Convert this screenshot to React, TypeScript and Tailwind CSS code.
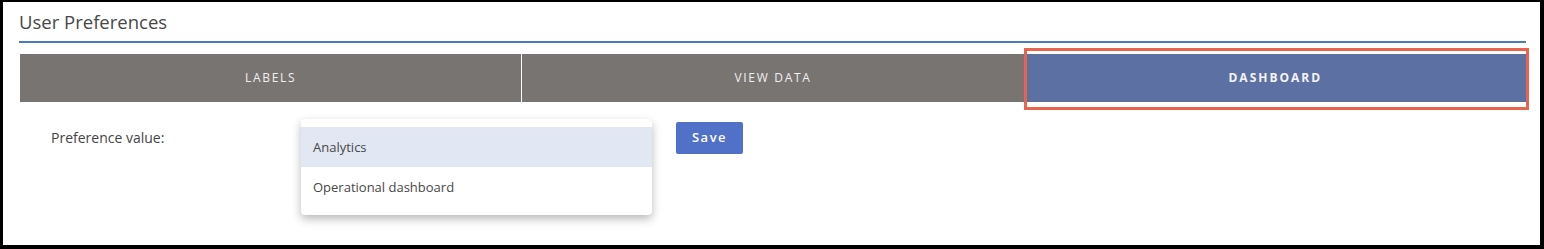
import React from "react";

const tabs = [
  { label: "LABELS", active: false },
  { label: "VIEW DATA", active: false },
  { label: "DASHBOARD", active: true },
];

export default function App() {
  return (
    <div
      className="relative box-border h-[249px] w-[1544px] overflow-hidden border-t-2 border-r-4 border-b-4 border-l-[3px] border-black bg-white"
      style={{ fontFamily: '"Open Sans", "Noto Sans", sans-serif' }}
    >
      <div className="pl-4 pr-[14px]">
        <h2 className="flex h-[39px] items-end pb-[10px] text-[18.5px] leading-none text-[#474747]">
          User Preferences
        </h2>
        <div className="h-[2px] bg-[#4a7bc2]" />
        <div className="relative mt-[11px] ml-px flex h-12">
          {tabs.map((t, i) => (
            <div
              key={t.label}
              className={
                "flex flex-1 items-center justify-center text-[12px] " +
                (i > 0 ? "border-l border-white " : "") +
                (t.active
                  ? "bg-[#5d70a3] font-bold tracking-[2px] text-[#f4f4f8]"
                  : "bg-[#787472] tracking-[1.7px] text-[#f0f0f0]")
              }
            >
              {t.label}
            </div>
          ))}
          <div className="pointer-events-none absolute top-[-6px] right-[-3px] h-[62px] w-[505px] border-[3px] border-[#e9644f]" />
        </div>
        <div className="mt-5 flex items-center pl-8">
          <div className="w-[250px] pb-px text-[14px] text-[#444]">Preference value:</div>
          <div className="relative h-8 w-[351px]">
            <div className="absolute top-[-3px] left-0 w-[351px] rounded bg-white py-2 shadow-[0_4px_10px_rgba(0,0,0,0.28)]">
              <div className="flex h-10 items-center bg-[#e1e7f3] px-3 pt-px text-[13px] text-[#484848]">
                Analytics
              </div>
              <div className="flex h-10 items-center px-3 pt-px text-[13px] text-[#484848]">
                Operational dashboard
              </div>
            </div>
          </div>
          <button className="ml-6 flex h-8 w-[67px] items-center justify-center rounded-[2px] bg-[#5171c9] text-[13px] font-semibold tracking-[1.5px] text-white">
            Save
          </button>
        </div>
      </div>
    </div>
  );
}
